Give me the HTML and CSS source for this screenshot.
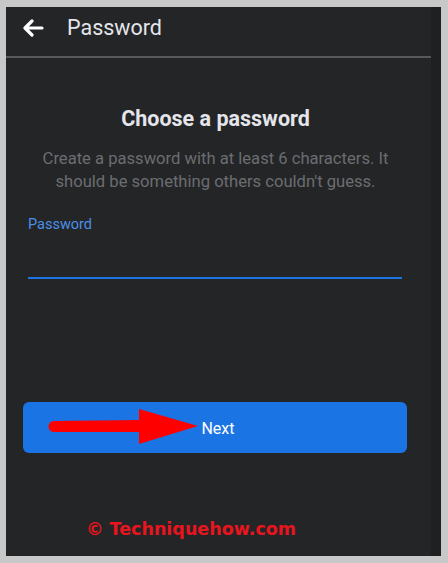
FILE: index.html
```html
<!DOCTYPE html>
<html lang="en">
<head>
    <meta charset="UTF-8">
    <title>Password</title>
    <link rel="stylesheet" href="styles.css">
</head>
<body>
    <div class="screen">
        <div class="content">
            <div class="header">
                <svg class="back" width="22" height="18" viewBox="0 0 22 18">
                    <path d="M20 9H4M10 2L3 9l7 7" fill="none" stroke="#ffffff" stroke-width="3.2" stroke-linecap="round" stroke-linejoin="round"/>
                </svg>
                <span class="header-title">Password</span>
            </div>

            <h2 class="title">Choose a password</h2>
            <p class="subtitle">Create a password with at least 6 characters. It should be something others couldn't guess.</p>

            <div class="field">
                <label class="field-label">Password</label>
                <div class="field-line"></div>
            </div>

            <div class="next-button">
                <span>Next</span>
                <!-- rotes Pfeil-Overlay -->
                <svg class="pointer" width="152" height="37" viewBox="0 0 152 37">
                    <path d="M7 12 L92 11 L92 0 L151 17 L92 35 L92 23 L7 23 A5.5 5.5 0 0 1 7 12 Z" fill="#ff0000"/>
                </svg>
            </div>

            <div class="watermark">© Techniquehow.com</div>
        </div>
        <div class="edge"></div>
    </div>
</body>
</html>
```

FILE: styles.css
```css
body {
    margin: 0;
    padding: 7px 7px 7px 6px;
    background-color: #c8c8c8;
    font-family: Roboto, 'Noto Sans', sans-serif;
}

.screen {
    display: flex;
    height: 549px;
    background-color: #242527;
}

.content {
    width: 425px;
    display: flex;
    flex-direction: column;
}

.edge {
    width: 10px;
    background-color: #1f2022;
}

.header {
    height: 49px;
    border-bottom: 2px solid #58595b;
    display: flex;
    align-items: center;
    padding-left: 16px;
}

.back {
    margin-top: -8px;
}

.header-title {
    margin-left: 23px;
    margin-top: -8px;
    font-size: 21.5px;
    color: #e4e6eb;
}

.title {
    margin: 48px 0 0 -6px;
    text-align: center;
    font-size: 21.5px;
    font-weight: bold;
    line-height: 25px;
    color: #e4e6eb;
}

.subtitle {
    margin: 16px 0 0 -6px;
    padding: 0 20px;
    text-align: center;
    font-size: 16.6px;
    line-height: 23px;
    color: #6b6d71;
}

.field {
    margin: 23px 29px 0 22px;
}

.field-label {
    display: block;
    font-size: 14.5px;
    line-height: 18px;
    color: #4b8fe6;
}

.field-line {
    margin-top: 43px;
    height: 2px;
    background-color: #1b74e4;
}

.next-button {
    position: relative;
    margin: 123px 24px 0 17px;
    height: 51px;
    border-radius: 6px;
    background-color: #1b74e4;
    display: flex;
    align-items: center;
    justify-content: center;
    color: #ffffff;
    font-size: 16px;
}

.next-button span {
    margin-left: 6px;
    margin-top: 2px;
}

.pointer {
    position: absolute;
    left: 24px;
    top: 7px;
}

.watermark {
    margin: 66px 0 0 80px;
    font-family: 'DejaVu Sans', sans-serif;
    font-weight: bold;
    font-size: 17.5px;
    color: #e8141e;
}
```
